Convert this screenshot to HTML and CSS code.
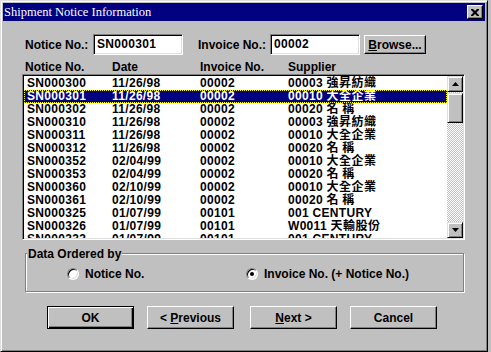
FILE: index.html
```html
<!DOCTYPE html>
<html>
<head>
<meta charset="utf-8">
<title>Shipment Notice Information</title>
<link rel="stylesheet" href="styles.css">
</head>
<body>
<div class="window">
  <div class="titlebar">
    <span class="title">Shipment Notice Information</span>
    <span class="close-btn">
      <svg width="8" height="7" viewBox="0 0 8 7"><path d="M0 0h2l2 2 2-2h2v1l-2.5 2.5L8 6v1H6L4 5 2 7H0V6l2.5-2.5L0 1z" fill="#000"/></svg>
    </span>
  </div>
  <div class="content">
    <div class="search-row">
      <span class="lbl lbl-notice">Notice No.:</span>
      <div class="field">SN000301</div>
      <span class="lbl lbl-invoice">Invoice No.:</span>
      <div class="field">00002</div>
      <div class="btn btn-browse"><span><u>B</u>rowse...</span></div>
    </div>
    <div class="list-head">
      <span>Notice No.</span><span>Date</span><span>Invoice No.</span><span>Supplier</span>
    </div>
    <div class="listbox">
      <div class="rows">
        <div class="row"><span>SN000300</span><span>11/26/98</span><span>00002</span><span>00003 <span class="cjk">強昇紡織</span></span></div>
        <div class="row selected"><span>SN000301</span><span>11/26/98</span><span>00002</span><span>00010 <span class="cjk">大全企業</span></span></div>
        <div class="row"><span>SN000302</span><span>11/26/98</span><span>00002</span><span>00020 <span class="cjk">名 稱</span></span></div>
        <div class="row"><span>SN000310</span><span>11/26/98</span><span>00002</span><span>00003 <span class="cjk">強昇紡織</span></span></div>
        <div class="row"><span>SN000311</span><span>11/26/98</span><span>00002</span><span>00010 <span class="cjk">大全企業</span></span></div>
        <div class="row"><span>SN000312</span><span>11/26/98</span><span>00002</span><span>00020 <span class="cjk">名 稱</span></span></div>
        <div class="row"><span>SN000352</span><span>02/04/99</span><span>00002</span><span>00010 <span class="cjk">大全企業</span></span></div>
        <div class="row"><span>SN000353</span><span>02/04/99</span><span>00002</span><span>00020 <span class="cjk">名 稱</span></span></div>
        <div class="row"><span>SN000360</span><span>02/10/99</span><span>00002</span><span>00010 <span class="cjk">大全企業</span></span></div>
        <div class="row"><span>SN000361</span><span>02/10/99</span><span>00002</span><span>00020 <span class="cjk">名 稱</span></span></div>
        <div class="row"><span>SN000325</span><span>01/07/99</span><span>00101</span><span>001 CENTURY</span></div>
        <div class="row"><span>SN000326</span><span>01/07/99</span><span>00101</span><span>W0011 <span class="cjk">天輸股份</span></span></div>
        <div class="row"><span>SN000333</span><span>01/07/99</span><span>00101</span><span>001 CENTURY</span></div>
      </div>
      <div class="scrollbar">
        <div class="sb-btn"><svg width="7" height="4" viewBox="0 0 7 4"><path d="M3.5 0L7 4H0z" fill="#000"/></svg></div>
        <div class="sb-thumb"></div>
        <div class="sb-track"></div>
        <div class="sb-btn"><svg width="7" height="4" viewBox="0 0 7 4"><path d="M0 0h7L3.5 4z" fill="#000"/></svg></div>
      </div>
    </div>
    <div class="group">
      <div class="group-title">Data Ordered by</div>
      <div class="radios">
        <label class="radio radio-first"><span class="radio-dot"></span>Notice No.</label>
        <label class="radio"><span class="radio-dot checked"></span>Invoice No. (+ Notice No.)</label>
      </div>
    </div>
    <div class="buttons">
      <div class="btn btn-action btn-default"><span>OK</span></div>
      <div class="btn btn-action btn-prev"><span>&lt; <u>P</u>revious</span></div>
      <div class="btn btn-action btn-next"><span><u>N</u>ext &gt;</span></div>
      <div class="btn btn-action btn-cancel"><span>Cancel</span></div>
    </div>
  </div>
</div>
</body>
</html>
```
FILE: styles.css
```css
* { box-sizing: border-box; }
html, body { margin: 0; padding: 0; }
body {
  width: 491px;
  height: 352px;
  overflow: hidden;
  background: #c0c0c0;
  font-family: "Liberation Sans", Arial, sans-serif;
  font-size: 12px;
  font-weight: bold;
  color: #000;
}
.window {
  width: 488px;
  height: 352px;
  background: #c0c0c0;
  border: 1px solid;
  border-color: #dfdfdf #000 #000 #dfdfdf;
  box-shadow: inset 1px 1px #fff, inset -1px -1px #808080;
  padding: 2px;
}
.titlebar {
  height: 18px;
  background: #000080;
  display: flex;
  align-items: center;
  justify-content: space-between;
  padding: 0 2px 0 1px;
}
.title {
  font-family: "Liberation Serif", "Times New Roman", serif;
  font-weight: normal;
  font-size: 12.5px;
  color: #fff;
}
.close-btn {
  width: 16px;
  height: 14px;
  background: #c0c0c0;
  border: 1px solid;
  border-color: #fff #000 #000 #fff;
  box-shadow: inset -1px -1px #808080;
  display: flex;
  align-items: center;
  justify-content: center;
}
.close-btn svg { display: block; }
.content {
  padding: 13px 0 0 19px;
}
.search-row {
  display: flex;
  align-items: center;
  height: 21px;
  padding-left: 3px;
}
.lbl { white-space: nowrap; }
.lbl-notice { width: 68px; }
.lbl-invoice { width: 72px; margin-left: 15px; }
.field {
  width: 90px;
  height: 21px;
  background: #fff;
  border: 1px solid;
  border-color: #808080 #fff #fff #808080;
  box-shadow: inset 1px 1px #000, inset -1px -1px #dfdfdf;
  padding-left: 3px;
  line-height: 19px;
  letter-spacing: 0.3px;
}
.btn {
  background: #c0c0c0;
  border: 1px solid;
  border-color: #fff #000 #000 #fff;
  box-shadow: inset -1px -1px #808080;
  display: flex;
  align-items: center;
  justify-content: center;
  white-space: nowrap;
}
.btn-browse {
  width: 62px;
  height: 19px;
  margin-left: 4px;
}
.list-head {
  display: grid;
  grid-template-columns: 87px 88px 88px auto;
  margin-top: 5px;
  padding-left: 3px;
  line-height: 14px;
  height: 14px;
}
.listbox {
  width: 443px;
  height: 166px;
  display: flex;
  background: #fff;
  border: 1px solid;
  border-color: #808080 #fff #fff #808080;
  box-shadow: inset 1px 1px #000, inset -1px -1px #dfdfdf;
  padding: 1px;
}
.rows {
  flex: 1;
  overflow: hidden;
  padding-top: 1px;
}
.row {
  display: grid;
  grid-template-columns: 85px 88px 88px auto;
  padding-left: 3px;
  height: 13px;
  line-height: 13px;
  white-space: nowrap;
  letter-spacing: 0.3px;
}
.row.selected {
  background: #000080;
  color: #fff;
  outline: 1px dotted #ffff00;
  outline-offset: -1px;
}
.cjk {
  font-family: "Noto Sans CJK TC", "Noto Sans CJK SC", sans-serif;
  font-weight: bold;
  font-size: 12px;
  line-height: 10px;
  letter-spacing: 0.5px;
}
.scrollbar {
  width: 16px;
  display: flex;
  flex-direction: column;
  background: repeating-conic-gradient(#fff 0 25%, #c0c0c0 0 50%) 0 0 / 2px 2px;
}
.sb-btn, .sb-thumb {
  width: 16px;
  background: #c0c0c0;
  border: 1px solid;
  border-color: #dfdfdf #000 #000 #dfdfdf;
  box-shadow: inset 1px 1px #fff, inset -1px -1px #808080;
}
.sb-btn {
  height: 16px;
  display: flex;
  align-items: center;
  justify-content: center;
}
.sb-btn svg { display: block; }
.sb-thumb { height: 30px; margin-top: 1px; }
.sb-track { flex: 1; }
.group {
  margin: 13px 0 0 3px;
  width: 439px;
  height: 39px;
  border: 1px solid #808080;
  box-shadow: inset 1px 1px #fff, 1px 1px #fff;
}
.group-title {
  width: max-content;
  margin: -7px 0 0 1px;
  padding: 0 1px;
  background: #c0c0c0;
  line-height: 14px;
}
.radios {
  display: flex;
  align-items: center;
  height: 14px;
  margin-top: 6px;
  padding-left: 41px;
}
.radio {
  display: flex;
  align-items: center;
  white-space: nowrap;
}
.radio-first { width: 179px; }
.radio-dot {
  width: 12px;
  height: 12px;
  border-radius: 50%;
  background: #fff;
  border: 1px solid;
  border-color: #808080 #fff #fff #808080;
  box-shadow: inset 1px 1px #000, inset -1px -1px #dfdfdf;
  margin-right: 6px;
  display: flex;
  align-items: center;
  justify-content: center;
}
.radio-dot.checked::after {
  content: "";
  width: 4px;
  height: 4px;
  border-radius: 50%;
  background: #000;
}
.buttons {
  display: flex;
  margin-top: 14px;
  padding-left: 25px;
}
.btn-action {
  width: 87px;
  height: 23px;
}
.btn-default {
  border: 1px solid #000;
  box-shadow: inset 1px 1px #fff, inset -1px -1px #000, inset -2px -2px #808080;
}
.btn-prev { margin-left: 13px; }
.btn-next { margin-left: 16px; }
.btn-cancel { margin-left: 13px; }
```
